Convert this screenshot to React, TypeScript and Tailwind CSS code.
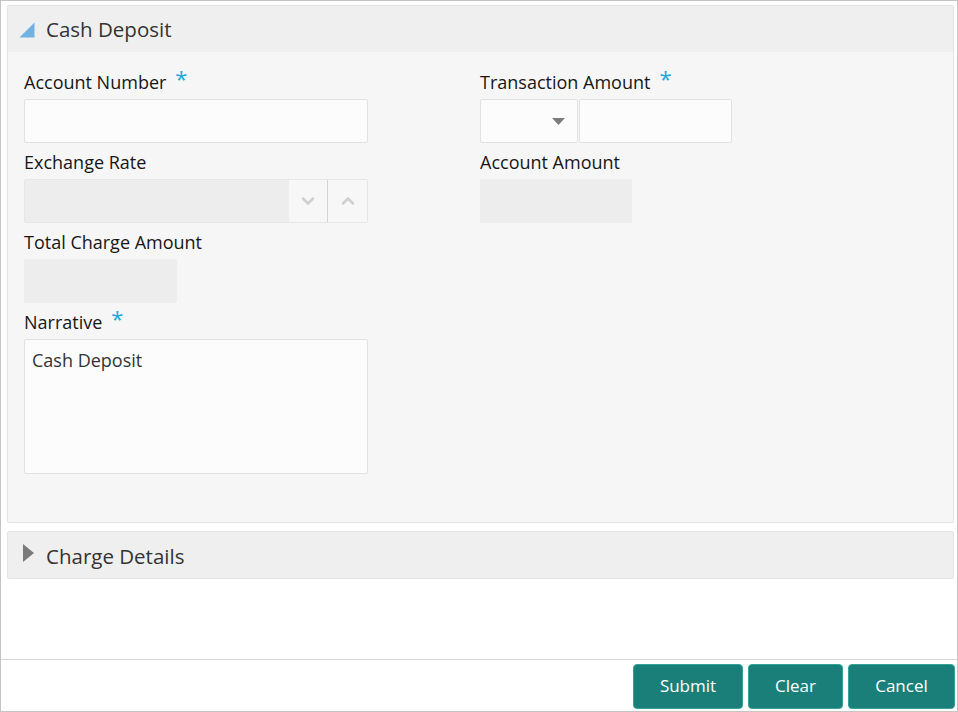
import { ChevronDown, ChevronUp } from 'lucide-react';

const font = { fontFamily: '"Open Sans", "Noto Sans", Arial, sans-serif' };

function Label({ text, required }: { text: string; required?: boolean }) {
  return (
    <div className="flex h-[36px] items-center pt-[2px] text-[18px] text-[#161616]">
      <span>{text}</span>
      {required && <span className="ml-[9px] -mt-[8px] text-[22px] leading-none text-[#1ea5dc]">*</span>}
    </div>
  );
}

export default function App() {
  return (
    <div
      className="flex h-[712px] w-[958px] flex-col border border-[#c4c4c4] bg-white"
      style={font}
    >
      <div className="flex-1 pl-[6px] pr-[3px] pt-[4px]">
        {/* Cash Deposit panel */}
        <div className="rounded-[2px] border border-[#e4e4e4] bg-[#f6f6f6] shadow-[0_0_2px_rgba(0,0,0,0.06)]">
          <div className="flex h-[46px] items-center bg-[#efefef] px-[11px]">
            <svg width="16" height="16" viewBox="0 0 16 16" className="mr-[11px] mt-[1px]">
              <polygon points="15.5,0.5 15.5,15.5 0.5,15.5" fill="#71b2e1" />
            </svg>
            <span className="text-[20.5px] text-[#333]">Cash Deposit</span>
          </div>
          <div className="grid grid-cols-[456px_1fr] px-[16px] pb-[48px] pt-[11px]">
            <div className="flex flex-col">
              <Label text="Account Number" required />
              <div className="h-[44px] w-[344px] rounded-[2px] border border-[#e2e2e2] bg-[#fcfcfc]" />
              <Label text="Exchange Rate" />
              <div className="flex h-[44px] w-[344px] overflow-hidden rounded-[2px] border border-[#e6e6e6]">
                <div className="flex-1 bg-[#ededed]" />
                <div className="flex w-[39px] items-center justify-center border-r border-[#d4d4d4] bg-[#f7f7f7]">
                  <ChevronDown size={20} strokeWidth={3} color="#cfcfcf" />
                </div>
                <div className="flex w-[39px] items-center justify-center bg-[#f7f7f7]">
                  <ChevronUp size={20} strokeWidth={3} color="#cfcfcf" />
                </div>
              </div>
              <Label text="Total Charge Amount" />
              <div className="h-[44px] w-[153px] rounded-[2px] bg-[#ededed]" />
              <Label text="Narrative" required />
              <div className="h-[135px] w-[344px] rounded-[2px] border border-[#e2e2e2] bg-[#fcfcfc] px-[7px] pt-[7px] text-[18px] text-[#333]">
                Cash Deposit
              </div>
            </div>
            <div className="flex flex-col">
              <Label text="Transaction Amount" required />
              <div className="flex h-[44px]">
                <div className="flex w-[98px] items-center justify-end rounded-[2px] border border-[#e2e2e2] bg-[#fcfcfc] pr-[12px]">
                  <svg width="13" height="9" viewBox="0 0 13 9">
                    <polygon points="0,1 13,1 6.5,8" fill="#7d7d7d" />
                  </svg>
                </div>
                <div className="ml-[1px] w-[153px] rounded-[2px] border border-[#e2e2e2] bg-[#fcfcfc]" />
              </div>
              <Label text="Account Amount" />
              <div className="h-[44px] w-[152px] rounded-[2px] bg-[#ededed]" />
            </div>
          </div>
        </div>

        {/* Charge Details panel */}
        <div className="mt-[8px] flex h-[48px] items-center rounded-[2px] border border-[#e4e4e4] bg-[#efefef] px-[15px]">
          <svg width="11" height="18" viewBox="0 0 11 18" className="mr-[12px] mt-[-5px]">
            <polygon points="0,0 11,9 0,18" fill="#7a7a7a" />
          </svg>
          <span className="pt-[3px] text-[20.5px] text-[#333]">Charge Details</span>
        </div>
      </div>

      {/* Footer */}
      <div className="flex h-[52px] items-center justify-end gap-[5px] border-t border-[#d6d6d6] pr-[2px] pt-[1px]">
        <button className="h-[45px] w-[110px] rounded-[4px] border border-[#33a39c] bg-[#1b7f79] text-[17px] text-white">
          Submit
        </button>
        <button className="h-[45px] w-[95px] rounded-[4px] border border-[#33a39c] bg-[#1b7f79] text-[17px] text-white">
          Clear
        </button>
        <button className="h-[45px] w-[107px] rounded-[4px] border border-[#33a39c] bg-[#1b7f79] text-[17px] text-white">
          Cancel
        </button>
      </div>
    </div>
  );
}
